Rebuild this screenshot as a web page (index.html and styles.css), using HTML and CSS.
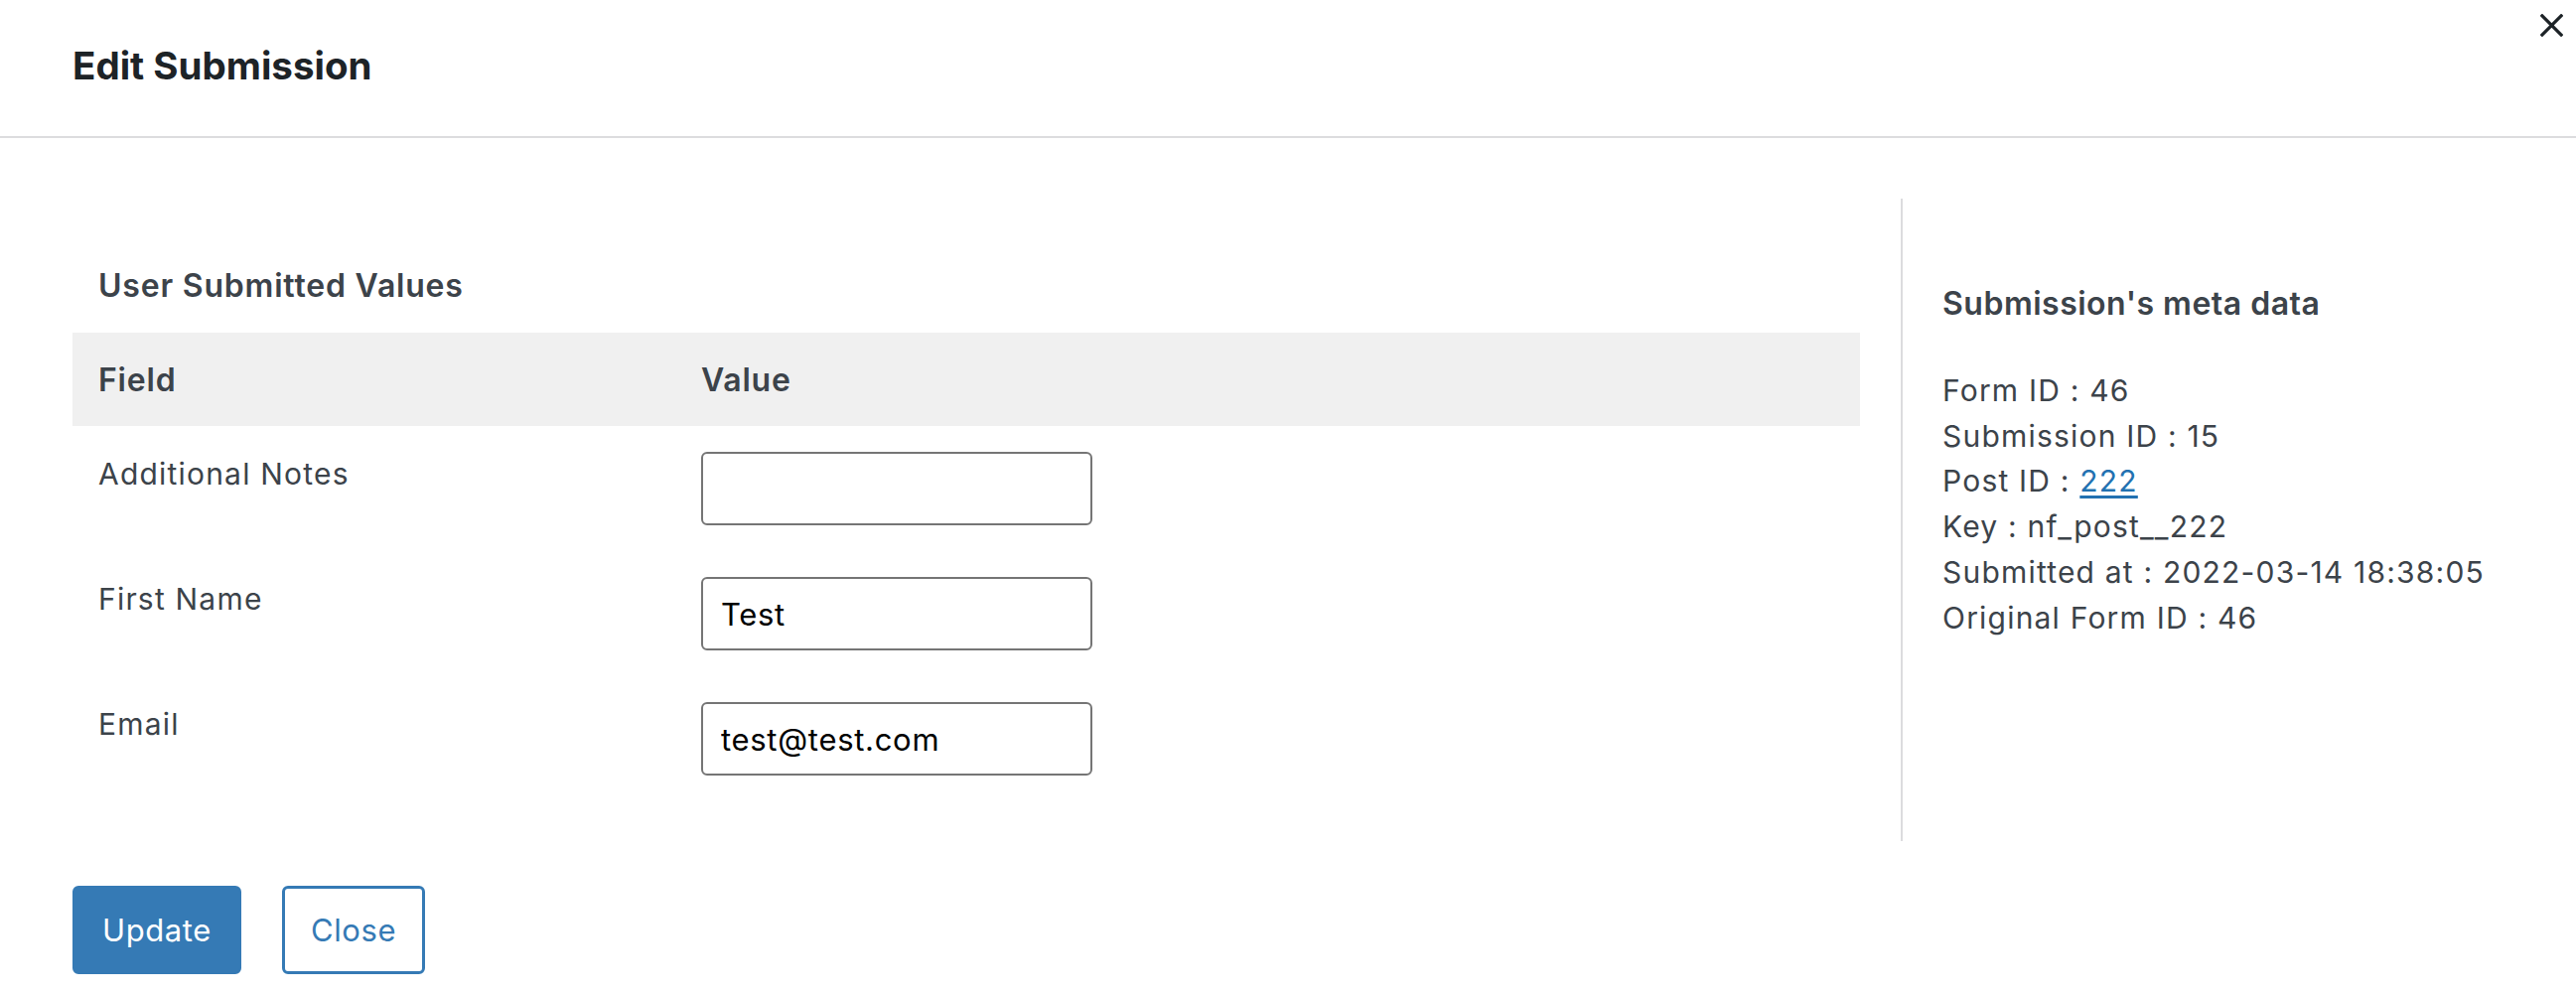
FILE: index.html
```html
<!DOCTYPE html>
<html lang="en">
<head>
<meta charset="utf-8">
<title>Edit Submission</title>
<link rel="stylesheet" href="styles.css">
</head>
<body>
<div class="modal">
  <header class="modal-header">
    <h1 class="modal-title">Edit Submission</h1>
    <button class="modal-close" aria-label="Close">
      <svg viewBox="0 0 24 24" width="24" height="24"><path d="M2 2 L22 22 M22 2 L2 22" stroke="#1d2327" stroke-width="3.4" fill="none" stroke-linecap="square"/></svg>
    </button>
  </header>
  <main class="modal-body">
    <section class="values">
      <h3 class="section-title">User Submitted Values</h3>
      <div class="table">
        <div class="thead">
          <div class="cell">Field</div>
          <div class="cell">Value</div>
        </div>
        <div class="row">
          <div class="cell label">Additional Notes</div>
          <div class="cell"><input class="field" type="text" value=""></div>
        </div>
        <div class="row">
          <div class="cell label">First Name</div>
          <div class="cell"><input class="field" type="text" value="Test"></div>
        </div>
        <div class="row">
          <div class="cell label">Email</div>
          <div class="cell"><input class="field" type="text" value="test@test.com"></div>
        </div>
      </div>
    </section>
    <aside class="meta">
      <h3 class="meta-title">Submission's meta data</h3>
      <ul class="meta-list">
        <li>Form ID : 46</li>
        <li>Submission ID : 15</li>
        <li>Post ID : <a href="#">222</a></li>
        <li>Key : nf_post__222</li>
        <li>Submitted at : 2022-03-14 18:38:05</li>
        <li>Original Form ID : 46</li>
      </ul>
    </aside>
  </main>
  <footer class="modal-footer">
    <button class="btn btn-primary">Update</button>
    <button class="btn btn-secondary">Close</button>
  </footer>
</div>
</body>
</html>
```
FILE: styles.css
```css
* { box-sizing: border-box; }
html, body { margin: 0; padding: 0; background: #fff; }
body {
  font-family: "Inter", "Liberation Sans", sans-serif;
  color: #3c434a;
  font-size: 30px;
  letter-spacing: 1.2px;
  line-height: 45px;
}
.modal { position: relative; }
.modal-header {
  height: 139px;
  border-bottom: 2px solid #dcdcde;
  padding: 0 73px 4px;
  display: flex;
  align-items: center;
}
.modal-title {
  margin: 0;
  font-size: 38.5px;
  font-weight: 700;
  letter-spacing: 0;
  color: #1d2327;
  line-height: 1.2;
}
.modal-close {
  position: absolute;
  top: 0;
  right: 0;
  width: 50px;
  height: 50px;
  border: 0;
  padding: 0;
  background: transparent;
  display: flex;
  align-items: center;
  justify-content: center;
}
.modal-close svg { width: 23px; height: 23px; }
.modal-body {
  display: flex;
  align-items: stretch;
  padding: 61px 0 0 73px;
}
.values {
  width: 1800px;
  flex: none;
  padding: 66px 0 40px;
}
.section-title, .meta-title {
  margin: 0;
  font-size: 32px;
  letter-spacing: 0.8px;
  line-height: 43px;
  font-weight: 600;
  color: #3c434a;
}
.meta-title { letter-spacing: 0.5px; margin-bottom: 44px; }
.section-title { padding-left: 26px; margin-bottom: 26px; }
.table { display: flex; flex-direction: column; }
.thead, .row {
  display: grid;
  grid-template-columns: 633px 1fr;
}
.thead {
  background: #f0f0f0;
  height: 94px;
  align-items: center;
  font-weight: 600;
  font-size: 32px;
  letter-spacing: 0.8px;
}
.cell { padding: 0 26px; }
.row .cell { padding: 26px 26px; }
.row .cell:last-child { padding-left: 0; }
.thead .cell:last-child { padding-left: 0; }
.field {
  display: block;
  width: 394px;
  height: 74px;
  border: 2px solid #757575;
  border-radius: 6px;
  padding: 0 18px;
  font-family: "Inter", "Liberation Sans", sans-serif;
  font-size: 31px;
  letter-spacing: 0.7px;
  color: #000;
  background: #fff;
  outline: none;
}
.meta {
  margin-left: 41px;
  border-left: 2px solid #dcdcde;
  padding: 84px 40px 0;
  flex: 1;
}
.meta-list { list-style: none; margin: 0; padding: 0; line-height: 45.7px; }
.meta-list a { color: #2271b1; text-decoration: underline; text-underline-offset: 4px; }
.modal-footer {
  display: flex;
  gap: 41px;
  padding: 45px 73px 0;
}
.btn {
  height: 89px;
  font-family: "Inter", "Liberation Sans", sans-serif;
  font-size: 31px;
  letter-spacing: 0.6px;
  border-radius: 6px;
  padding: 0;
  cursor: pointer;
}
.btn-primary {
  width: 170px;
  background: #357ab5;
  border: 2px solid #357ab5;
  color: #fff;
}
.btn-secondary {
  width: 144px;
  background: #fff;
  border: 3px solid #357ab5;
  color: #357ab5;
}
```
